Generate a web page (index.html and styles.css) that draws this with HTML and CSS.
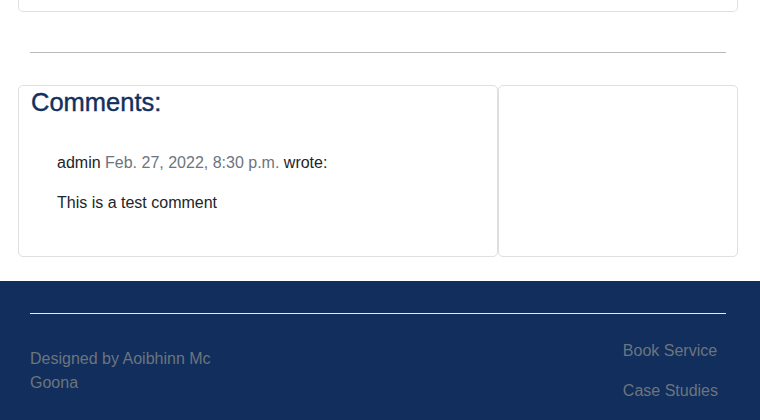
FILE: index.html
```html
<!DOCTYPE html>
<html>
<head>
<meta charset="utf-8">
<link rel="stylesheet" href="styles.css">
</head>
<body>
<div class="page">
  <div class="top-card"></div>
  <hr class="divider">
  <div class="comments-row">
    <div class="card comments-card">
      <h2 class="comments-title">Comments:</h2>
      <div class="comment">
        <p class="comment-meta">admin <span class="date">Feb. 27, 2022, 8:30 p.m.</span> wrote:</p>
        <p class="comment-body">This is a test comment</p>
      </div>
    </div>
    <div class="card side-card"></div>
  </div>
</div>
<footer class="footer">
  <hr class="footer-rule">
  <div class="footer-row">
    <p class="credit">Designed by Aoibhinn Mc Goona</p>
    <ul class="footer-links">
      <li><a href="#">Book Service</a></li>
      <li><a href="#">Case Studies</a></li>
    </ul>
  </div>
</footer>
</body>
</html>
```
FILE: styles.css
```css
* { box-sizing: border-box; }
body {
  margin: 0;
  font-family: "Liberation Sans", Arial, sans-serif;
  font-size: 16px;
  line-height: 24px;
  color: #212529;
  background: #fff;
}
.page { padding: 0 22px 0 18px; }
.top-card {
  height: 12px;
  border: 1px solid rgba(0,0,0,.125);
  border-top: none;
  border-radius: 0 0 5px 5px;
}
.divider {
  margin: 40px 12px 0 12px;
  border: 0;
  border-top: 1px solid #b9b9b9;
  height: 0;
}
.comments-row {
  display: flex;
  margin-top: 32px;
}
.card {
  border: 1px solid rgba(0,0,0,.125);
  border-radius: 5px;
  height: 172px;
}
.comments-card { width: 480px; padding: 1px 12px; }
.side-card { width: 240px; }
.comments-title {
  margin: 0;
  font-family: "Liberation Sans", Arial, sans-serif;
  font-weight: 400;
  font-size: 25.5px;
  line-height: 30px;
  color: #12305e;
  -webkit-text-stroke: 0.4px #12305e;
}
.comment { padding: 34px 0 0 26px; }
.comment p { margin: 0; }
.comment-body { margin-top: 16px !important; }
.date { color: #6c757d; }
.footer {
  margin-top: 24px;
  background: #112e5c;
  padding: 32px 34px 20px 30px;
  height: 139px;
}
.footer-rule {
  margin: 0;
  border: 0;
  border-top: 1px solid #e8ebf0;
}
.footer-row {
  display: flex;
  justify-content: space-between;
  margin-top: 25px;
}
.credit {
  margin: 8px 0 0 0;
  width: 200px;
  color: #6c757d;
}
.footer-links {
  list-style: none;
  margin: 0;
  padding: 0 8px 0 0;
}
.footer-links li { margin-bottom: 16px; }
.footer-links a { color: #6c757d; text-decoration: none; }
```
